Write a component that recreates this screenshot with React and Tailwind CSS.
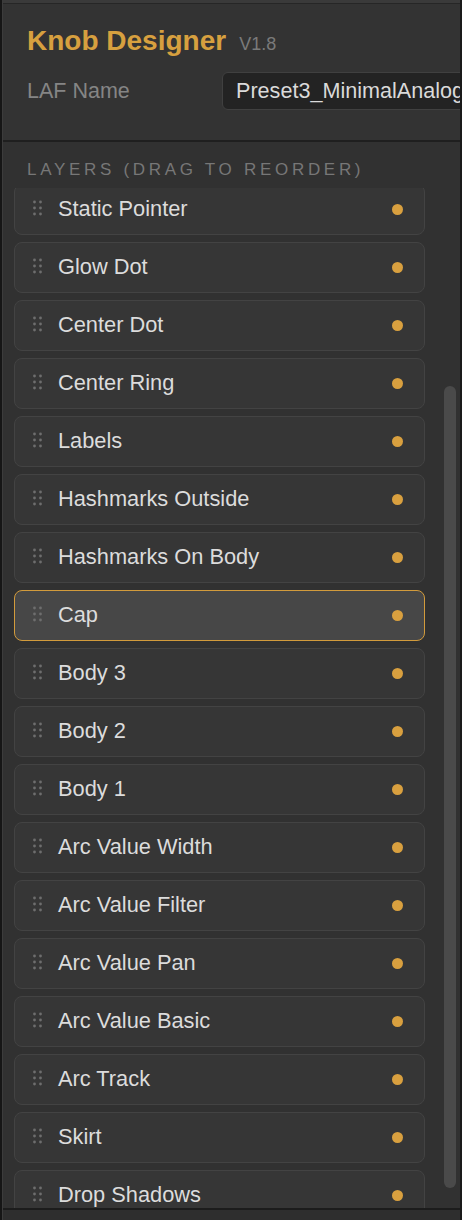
import React from "react";

const layers = [
  "Static Pointer",
  "Glow Dot",
  "Center Dot",
  "Center Ring",
  "Labels",
  "Hashmarks Outside",
  "Hashmarks On Body",
  "Cap",
  "Body 3",
  "Body 2",
  "Body 1",
  "Arc Value Width",
  "Arc Value Filter",
  "Arc Value Pan",
  "Arc Value Basic",
  "Arc Track",
  "Skirt",
  "Drop Shadows",
];

function Handle() {
  return (
    <svg width="9" height="16" viewBox="0 0 9 16" className="shrink-0">
      {[1.5, 7.5].map((x) =>
        [2, 8, 14].map((y) => (
          <circle key={x + "-" + y} cx={x} cy={y} r="1.4" fill="#6e6e6e" />
        ))
      )}
    </svg>
  );
}

function LayerRow({ name, selected }) {
  return (
    <div
      className={
        selected
          ? "h-[51px] shrink-0 rounded-[8px] border-[1.5px] border-[#d29b3c] bg-[#474747] flex items-center pl-[18px] pr-[21px]"
          : "h-[51px] shrink-0 rounded-[8px] border-[1.5px] border-[#434343] bg-[#363636] flex items-center pl-[18px] pr-[21px]"
      }
    >
      <div className="-mt-[3px]">
        <Handle />
      </div>
      <span className="ml-[16px] flex-1 text-[21.8px] leading-[24px] text-[#dcdcdc]">
        {name}
      </span>
      <span className="w-[11px] h-[11px] rounded-full bg-[#d9a03f]" />
    </div>
  );
}

export default function App() {
  return (
    <div
      className="w-[462px] h-[1220px] overflow-hidden flex bg-[#1a1a1a]"
      style={{ fontFamily: '"Liberation Sans", Arial, sans-serif' }}
    >
      <div className="w-[2px] bg-[#161616] shrink-0" />
      <div className="w-[1px] bg-[#3c3c3c] shrink-0" />
      <div className="w-[457px] shrink-0 flex flex-col bg-[#313131] overflow-hidden">
        <div className="h-[3px] bg-[#3a3a3a] shrink-0" />
        <div className="h-[1px] bg-[#262626] shrink-0" />
        <div className="h-[136px] shrink-0 bg-[#333333] pl-[24px] pt-[21px]">
          <div className="flex items-baseline">
            <span className="text-[28px] leading-[32px] font-bold text-[#d7a03f]">
              Knob Designer
            </span>
            <span className="ml-[13px] text-[18px] leading-[20px] text-[#7a7a7a]">
              V1.8
            </span>
          </div>
          <div className="mt-[15px] flex items-center h-[38px]">
            <span className="w-[195px] shrink-0 text-[21.5px] text-[#858585]">
              LAF Name
            </span>
            <div className="h-[38px] w-[300px] shrink-0 rounded-[6px] border border-[#404040] bg-[#232323] flex items-center pl-[13px] text-[21.6px] text-[#dadada] whitespace-nowrap">
              Preset3_MinimalAnalog
            </div>
          </div>
        </div>
        <div className="h-[2px] bg-[#1f1f1f] shrink-0" />
        <div className="pt-[18px] pl-[24px] shrink-0">
          <div className="text-[17px] leading-[20px] tracking-[3.7px] text-[#777777] whitespace-nowrap">
            LAYERS (DRAG TO REORDER)
          </div>
        </div>
        <div className="mt-[8px] h-[1020px] shrink-0 overflow-hidden flex">
          <div className="ml-[11px] w-[411px] shrink-0 flex flex-col gap-[7px] -mt-[4.5px]">
            {layers.map((l) => (
              <LayerRow key={l} name={l} selected={l === "Cap"} />
            ))}
          </div>
          <div className="ml-[19px] w-[12px] shrink-0">
            <div className="mt-[198px] h-[802px] w-[12px] rounded-full bg-[#4a4a4a]" />
          </div>
        </div>
        <div className="h-[2px] bg-[#1c1c1c] shrink-0" />
        <div className="flex-1 bg-[#2e2e2e]" />
      </div>
      <div className="w-[2px] bg-[#1a1a1a] shrink-0" />
    </div>
  );
}
